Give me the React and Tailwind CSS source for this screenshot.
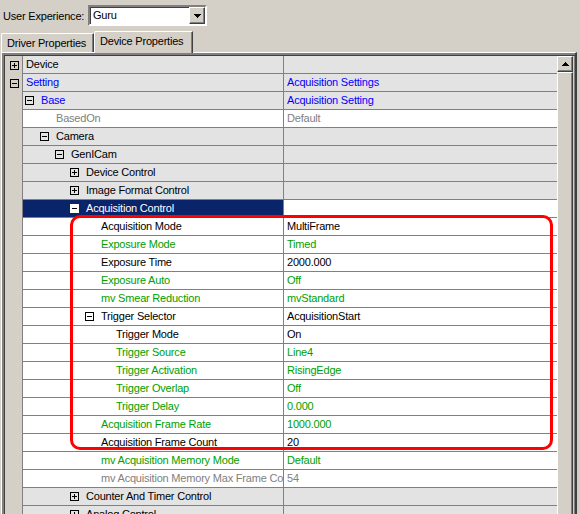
import React from "react";

const rows = [
  { l: 0, box: "plus", name: "Device", val: "", bg: "gray", c: "black" },
  { l: 0, box: "minus", name: "Setting", val: "Acquisition Settings", bg: "gray", c: "blue" },
  { l: 1, box: "minus", name: "Base", val: "Acquisition Setting", bg: "gray", c: "blue" },
  { l: 2, name: "BasedOn", val: "Default", bg: "white", c: "gray" },
  { l: 2, box: "minus", name: "Camera", val: "", bg: "gray", c: "black" },
  { l: 3, box: "minus", name: "GenICam", val: "", bg: "gray", c: "black" },
  { l: 4, box: "plus", name: "Device Control", val: "", bg: "gray", c: "black" },
  { l: 4, box: "plus", name: "Image Format Control", val: "", bg: "gray", c: "black" },
  { l: 4, box: "minus", name: "Acquisition Control", val: "", bg: "white", c: "white", sel: true },
  { l: 5, name: "Acquisition Mode", val: "MultiFrame", bg: "white", c: "black" },
  { l: 5, name: "Exposure Mode", val: "Timed", bg: "white", c: "green" },
  { l: 5, name: "Exposure Time", val: "2000.000", bg: "white", c: "black" },
  { l: 5, name: "Exposure Auto", val: "Off", bg: "white", c: "green" },
  { l: 5, name: "mv Smear Reduction", val: "mvStandard", bg: "white", c: "green" },
  { l: 5, box: "minus", name: "Trigger Selector", val: "AcquisitionStart", bg: "white", c: "black" },
  { l: 6, name: "Trigger Mode", val: "On", bg: "white", c: "black" },
  { l: 6, name: "Trigger Source", val: "Line4", bg: "white", c: "green" },
  { l: 6, name: "Trigger Activation", val: "RisingEdge", bg: "white", c: "green" },
  { l: 6, name: "Trigger Overlap", val: "Off", bg: "white", c: "green" },
  { l: 6, name: "Trigger Delay", val: "0.000", bg: "white", c: "green" },
  { l: 5, name: "Acquisition Frame Rate", val: "1000.000", bg: "white", c: "green" },
  { l: 5, name: "Acquisition Frame Count", val: "20", bg: "white", c: "black" },
  { l: 5, name: "mv Acquisition Memory Mode", val: "Default", bg: "white", c: "green" },
  { l: 5, name: "mv Acquisition Memory Max Frame Count", val: "54", bg: "white", c: "gray" },
  { l: 4, box: "plus", name: "Counter And Timer Control", val: "", bg: "gray", c: "black" },
  { l: 4, box: "plus", name: "Analog Control", val: "", bg: "gray", c: "black" },
];

const colors = {
  black: "text-black",
  blue: "text-[#0000ff]",
  green: "text-[#00a000]",
  gray: "text-[#808080]",
  white: "text-white",
};

function Box({ type, sel }) {
  return (
    <svg width="9" height="9" viewBox="0 0 9 9" shapeRendering="crispEdges" className="shrink-0">
      <rect x="0.5" y="0.5" width="8" height="8" fill={sel ? "#ffffff" : "none"} stroke={sel ? "#ffffff" : "#000000"} />
      <path d="M2 4.5h5" stroke="#000000" />
      {type === "plus" && <path d="M4.5 2v5" stroke="#000000" />}
    </svg>
  );
}

function Row({ r }) {
  const gray = r.bg === "gray";
  const nameBg = r.sel ? "bg-[#0a246a]" : gray ? "bg-[#e3e3e3]" : "bg-white";
  const valBg = gray ? "bg-[#e3e3e3]" : "bg-white";
  const boxed = r.box && r.l > 0;
  const pad = boxed ? 15 * r.l - 13 : 3 + 15 * r.l;
  return (
    <div className="flex h-[18px] shrink-0">
      <div className="w-[18px] shrink-0 border-r border-[#808080] bg-[#d4d0c8] flex items-center pl-[5px]">
        {r.l === 0 && r.box && <Box type={r.box} />}
      </div>
      <div
        className={`w-[261px] shrink-0 border-b border-r border-[#808080] ${nameBg} flex items-center overflow-hidden whitespace-nowrap`}
        style={{ paddingLeft: pad }}
      >
        {boxed && <Box type={r.box} sel={r.sel} />}
        <span className={`${colors[r.c]} ${boxed ? "ml-[7px]" : ""}`}>{r.name}</span>
      </div>
      <div className={`w-[274px] shrink-0 border-b border-r border-[#808080] ${valBg} flex items-center pl-[3px] overflow-hidden whitespace-nowrap`}>
        <span className={colors[r.sel ? "black" : r.c]}>{r.val}</span>
      </div>
    </div>
  );
}

export default function App() {
  return (
    <div className="relative w-[580px] h-[514px] overflow-hidden bg-[#d4d0c8] font-['Liberation_Sans',Arial,sans-serif] text-[11px] tracking-[-0.2px] text-black leading-none">
      {/* top bar */}
      <div className="flex h-[31px] items-start">
        <span className="w-[88px] shrink-0 pl-[3px] pt-[11px]">User Experience:</span>
        <div className="mt-[5px] w-[119px] h-[21px] border-2 border-t-[#808080] border-l-[#808080] border-b-white border-r-white shadow-[inset_1px_1px_0_#404040] bg-white flex items-center justify-between">
          <span className="pl-[3px]">Guru</span>
          <div className="w-[16px] h-[17px] bg-[#d4d0c8] border border-t-white border-l-white border-b-[#404040] border-r-[#404040] shadow-[inset_-1px_-1px_0_#808080] flex items-center justify-center">
            <svg width="7" height="4" viewBox="0 0 7 4" shapeRendering="crispEdges">
              <path d="M0 0h7L3.5 4z" fill="#000" />
            </svg>
          </div>
        </div>
      </div>
      {/* tabs */}
      <div className="flex h-[21px] items-start">
        <div className="ml-[1px] mt-[2px] w-[93px] h-[19px] border-t border-l border-white border-r border-r-[#404040] rounded-tl-[2px] shadow-[inset_-1px_0_0_#808080] flex items-center pl-[5px]">
          Driver Properties
        </div>
        <div className="relative z-10 w-[99px] h-[22px] bg-[#d4d0c8] border-t border-l border-white border-r border-r-[#404040] rounded-tl-[2px] shadow-[inset_-1px_0_0_#808080] flex items-center pl-[5px] pb-[2px]">
          Device Properties
        </div>
      </div>
      {/* panel */}
      <div className="ml-[1px] w-[576px] h-[470px] border-t border-l border-white border-r-2 border-r-[#404040] shadow-[inset_-1px_0_0_#808080]">
        <div className="h-full border-t-2 border-l-2 border-t-[#808080] border-l-[#808080] shadow-[inset_1px_1px_0_#404040] flex">
          <div className="w-[553px] shrink-0 flex flex-col overflow-hidden pt-[1px] pl-[1px]">
            {rows.map((r, i) => (
              <Row key={i} r={r} />
            ))}
          </div>
          <div className="w-[16px] shrink-0 flex flex-col pt-[1px]">
            <div className="h-[16px] bg-[#d4d0c8] border border-t-white border-l-white border-b-[#404040] border-r-[#404040] shadow-[inset_-1px_-1px_0_#808080] flex items-center justify-center">
              <svg width="7" height="4" viewBox="0 0 7 4" shapeRendering="crispEdges">
                <path d="M0 4h7L3.5 0z" fill="#000" />
              </svg>
            </div>
            <div className="flex-1 bg-[#d4d0c8] border border-t-white border-l-white border-b-[#404040] border-r-[#404040] shadow-[inset_-1px_-1px_0_#808080]" />
          </div>
        </div>
      </div>
      {/* red highlight */}
      <div className="absolute left-[70px] top-[215px] w-[483px] h-[235px] border-[3px] border-[#ff0000] rounded-[10px] pointer-events-none" />
    </div>
  );
}
